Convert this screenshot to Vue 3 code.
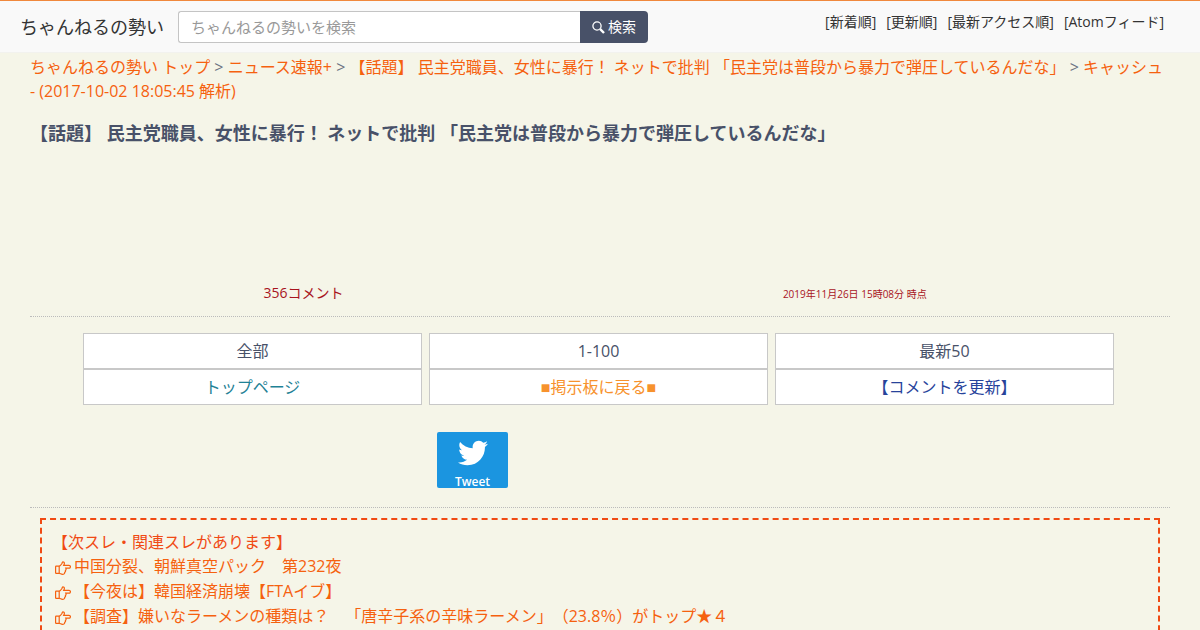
<template>
  <div class="page">
    <header class="navbar">
      <a class="brand" href="#">ちゃんねるの勢い</a>
      <form class="search" @submit.prevent>
        <input v-model="keyword" class="search-input" type="search" aria-label="検索キーワード" placeholder="ちゃんねるの勢いを検索">
        <button class="search-btn" type="submit">
          <svg class="icon-search" viewBox="0 0 13 13" aria-hidden="true">
            <circle cx="5" cy="5" r="4.1" />
            <path d="M8.2 8.2L12 12" />
          </svg>検索
        </button>
      </form>
      <nav class="nav-links">
        <a v-for="item in orders" :key="item" href="#">[{{ item }}]</a>
      </nav>
    </header>

    <main class="container">
      <div class="breadcrumb">
        <a href="#">ちゃんねるの勢い トップ</a> &gt; <a href="#">ニュース速報+</a> &gt; <a href="#">{{ title }}</a> &gt; <a href="#">キャッシュ - (2017-10-02 18:05:45 解析)</a>
      </div>

      <h1 class="title">{{ title }}</h1>

      <div class="stats">
        <span class="stat-count">356コメント</span>
        <span class="stat-date">2019年11月26日 15時08分 時点</span>
      </div>

      <nav class="pager">
        <a v-for="p in pages" :key="p.label" class="pager-link" :class="p.type" href="#">{{ p.label }}</a>
      </nav>

      <div class="share">
        <a class="tweet" href="#">
          <svg class="icon-bird" viewBox="0 48 512 416" aria-hidden="true">
            <path d="M459.37 151.716c.325 4.548.325 9.097.325 13.645 0 138.72-105.583 298.558-298.558 298.558-59.452 0-114.68-17.219-161.137-47.106 8.447.974 16.568 1.299 25.34 1.299 49.055 0 94.213-16.568 130.274-44.832-46.132-.975-84.792-31.188-98.112-72.772 6.498.974 12.995 1.624 19.818 1.624 9.421 0 18.843-1.3 27.614-3.573-48.081-9.747-84.143-51.98-84.143-102.985v-1.299c13.969 7.797 30.214 12.67 47.431 13.319-28.264-18.843-46.781-51.005-46.781-87.391 0-19.492 5.197-37.36 14.294-52.954 51.655 63.675 129.3 105.258 216.365 109.807-1.624-7.797-2.599-15.918-2.599-24.04 0-57.828 46.782-104.934 104.934-104.934 30.213 0 57.502 12.67 76.67 33.137 23.715-4.548 46.456-13.32 66.599-25.34-7.798 24.366-24.366 44.833-46.132 57.827 21.117-2.273 41.584-8.122 60.426-16.243-14.292 20.791-32.161 39.308-52.628 54.253z" />
          </svg>
          <span>Tweet</span>
        </a>
      </div>

      <section class="related">
        <p class="related-head">【次スレ・関連スレがあります】</p>
        <ul class="related-list">
          <li v-for="thread in threads" :key="thread">
            <a href="#">
              <svg class="icon-hand" viewBox="0 0 16 14" aria-hidden="true">
                <path d="M4.2 5.2H1.2q-.6 0-.6.6v6q0 .6.6.6h3z" />
                <path d="M4.2 5.2c1.3 0 1.6-1.4 2.5-2.4C7.3 2.1 7.2.8 8 .8c1.6 0 1.8 1.6.7 3.5h5.3c1.9 0 1.9 2.9 0 2.9h-3.2c.5 1 .3 1.7-.4 2.2.3.9 0 1.6-.7 1.9.1 1.5-.8 2-2.3 2-1.4 0-2-.9-3.2-.9" />
              </svg>
              <span>{{ thread }}</span>
            </a>
          </li>
        </ul>
      </section>
    </main>
  </div>
</template>

<script setup>
import { ref } from 'vue'

const keyword = ref('')
const title = '【話題】 民主党職員、女性に暴行！ ネットで批判 「民主党は普段から暴力で弾圧しているんだな」'
const orders = ['新着順', '更新順', '最新アクセス順', 'Atomフィード']
const pages = [
  { label: '全部', type: '' },
  { label: '1-100', type: '' },
  { label: '最新50', type: '' },
  { label: 'トップページ', type: 'top' },
  { label: '■掲示板に戻る■', type: 'board' },
  { label: '【コメントを更新】', type: 'reload' }
]
const threads = [
  '中国分裂、朝鮮真空パック　第232夜',
  '【今夜は】韓国経済崩壊【FTAイブ】',
  '【調査】嫌いなラーメンの種類は？　「唐辛子系の辛味ラーメン」（23.8％）がトップ★４'
]
</script>

<style>
body { margin: 0; background: #f5f5e8; }
</style>

<style scoped>
.page {
  min-height: 100vh;
  overflow: hidden;
  color: #485168;
  font-family: "Open Sans", "Liberation Sans", "Noto Sans CJK JP", sans-serif;
  font-size: 16px;
  line-height: 24px;
  text-spacing-trim: space-all;
}
.page * { box-sizing: border-box; }
a { color: #f5610f; text-decoration: none; }

/* header */
.navbar {
  display: flex;
  align-items: flex-start;
  height: 53px;
  padding: 10px 36px 0 20px;
  border-top: 1px solid #f0883c;
  border-bottom: 1px solid #f2f2ee;
  background: #f9f9f9;
}
.brand { margin-right: 14px; color: #333; font-size: 18px; line-height: 32px; white-space: nowrap; }
.search { display: flex; width: 470px; height: 32px; }
.search-input {
  flex: 1;
  min-width: 0;
  padding: 0 12px;
  border: 1px solid #c4c4c4;
  border-right: 0;
  border-radius: 3px 0 0 3px;
  outline: none;
  background: #fff;
  color: #485168;
  font: inherit;
  font-size: 15px;
  appearance: none;
}
.search-input::placeholder { color: #999; }
.search-btn {
  display: flex;
  align-items: center;
  gap: 3px;
  padding: 0 12px;
  border: 0;
  border-radius: 0 4px 4px 0;
  background: #485168;
  color: #fff;
  font: inherit;
  font-size: 14px;
  cursor: pointer;
}
.icon-search { width: 13px; height: 13px; fill: none; stroke: #fff; stroke-width: 1.3; }
.icon-search path { stroke-width: 2.4; }
.nav-links { display: flex; gap: 10px; margin-left: auto; font-size: 14px; line-height: 22px; white-space: nowrap; }
.nav-links a { color: #333; }

/* content */
.container { padding: 2px 30px 0; }
.breadcrumb { color: #6b7282; }
.title { margin: 18px 0 0; font-size: 18px; font-weight: 700; line-height: 24px; }
.stats {
  display: flex;
  align-items: baseline;
  gap: 4px;
  margin-top: 136px;
  padding-bottom: 10px;
  border-bottom: 1px dotted #bbb;
  color: #a8141e;
  text-align: center;
}
.stats span { width: 48%; }
.stat-count { font-size: 14px; }
.stat-date { font-size: 10px; }

.pager { display: grid; grid-template-columns: repeat(3, 1fr); column-gap: 7px; margin: 16px 56px 0 53px; }
.pager-link { padding: 5px 0; border: 1px solid #c8c8c8; background: #fff; color: #485168; text-align: center; }
.pager-link.top { color: #1f8296; }
.pager-link.board { color: #f7922d; }
.pager-link.reload { color: #27439b; }

.share { display: flex; padding: 27px 0 19px 407px; border-bottom: 1px dotted #bbb; }
.tweet {
  display: flex;
  flex-direction: column;
  align-items: center;
  width: 71px;
  height: 56px;
  padding-top: 8px;
  border-radius: 2px;
  background: #1b95e0;
  color: #fff;
  font-size: 12px;
  font-weight: 600;
}
.tweet span { margin-top: 8px; line-height: 16px; }
.icon-bird { flex: none; width: 30px; height: 26px; fill: #fff; }

.related { margin: 10px; padding: 10px; border: 2px dashed #f04a14; }
.related-head { margin: 0; color: #f04a14; }
.related-list { margin: 0; padding: 0; list-style: none; }
.related-list a { display: flex; align-items: center; gap: 3px; padding-left: 3px; line-height: 25px; }
.icon-hand { flex: none; width: 16px; height: 14px; margin-top: 3px; fill: none; stroke: #f5610f; stroke-width: 1.2; }
</style>
